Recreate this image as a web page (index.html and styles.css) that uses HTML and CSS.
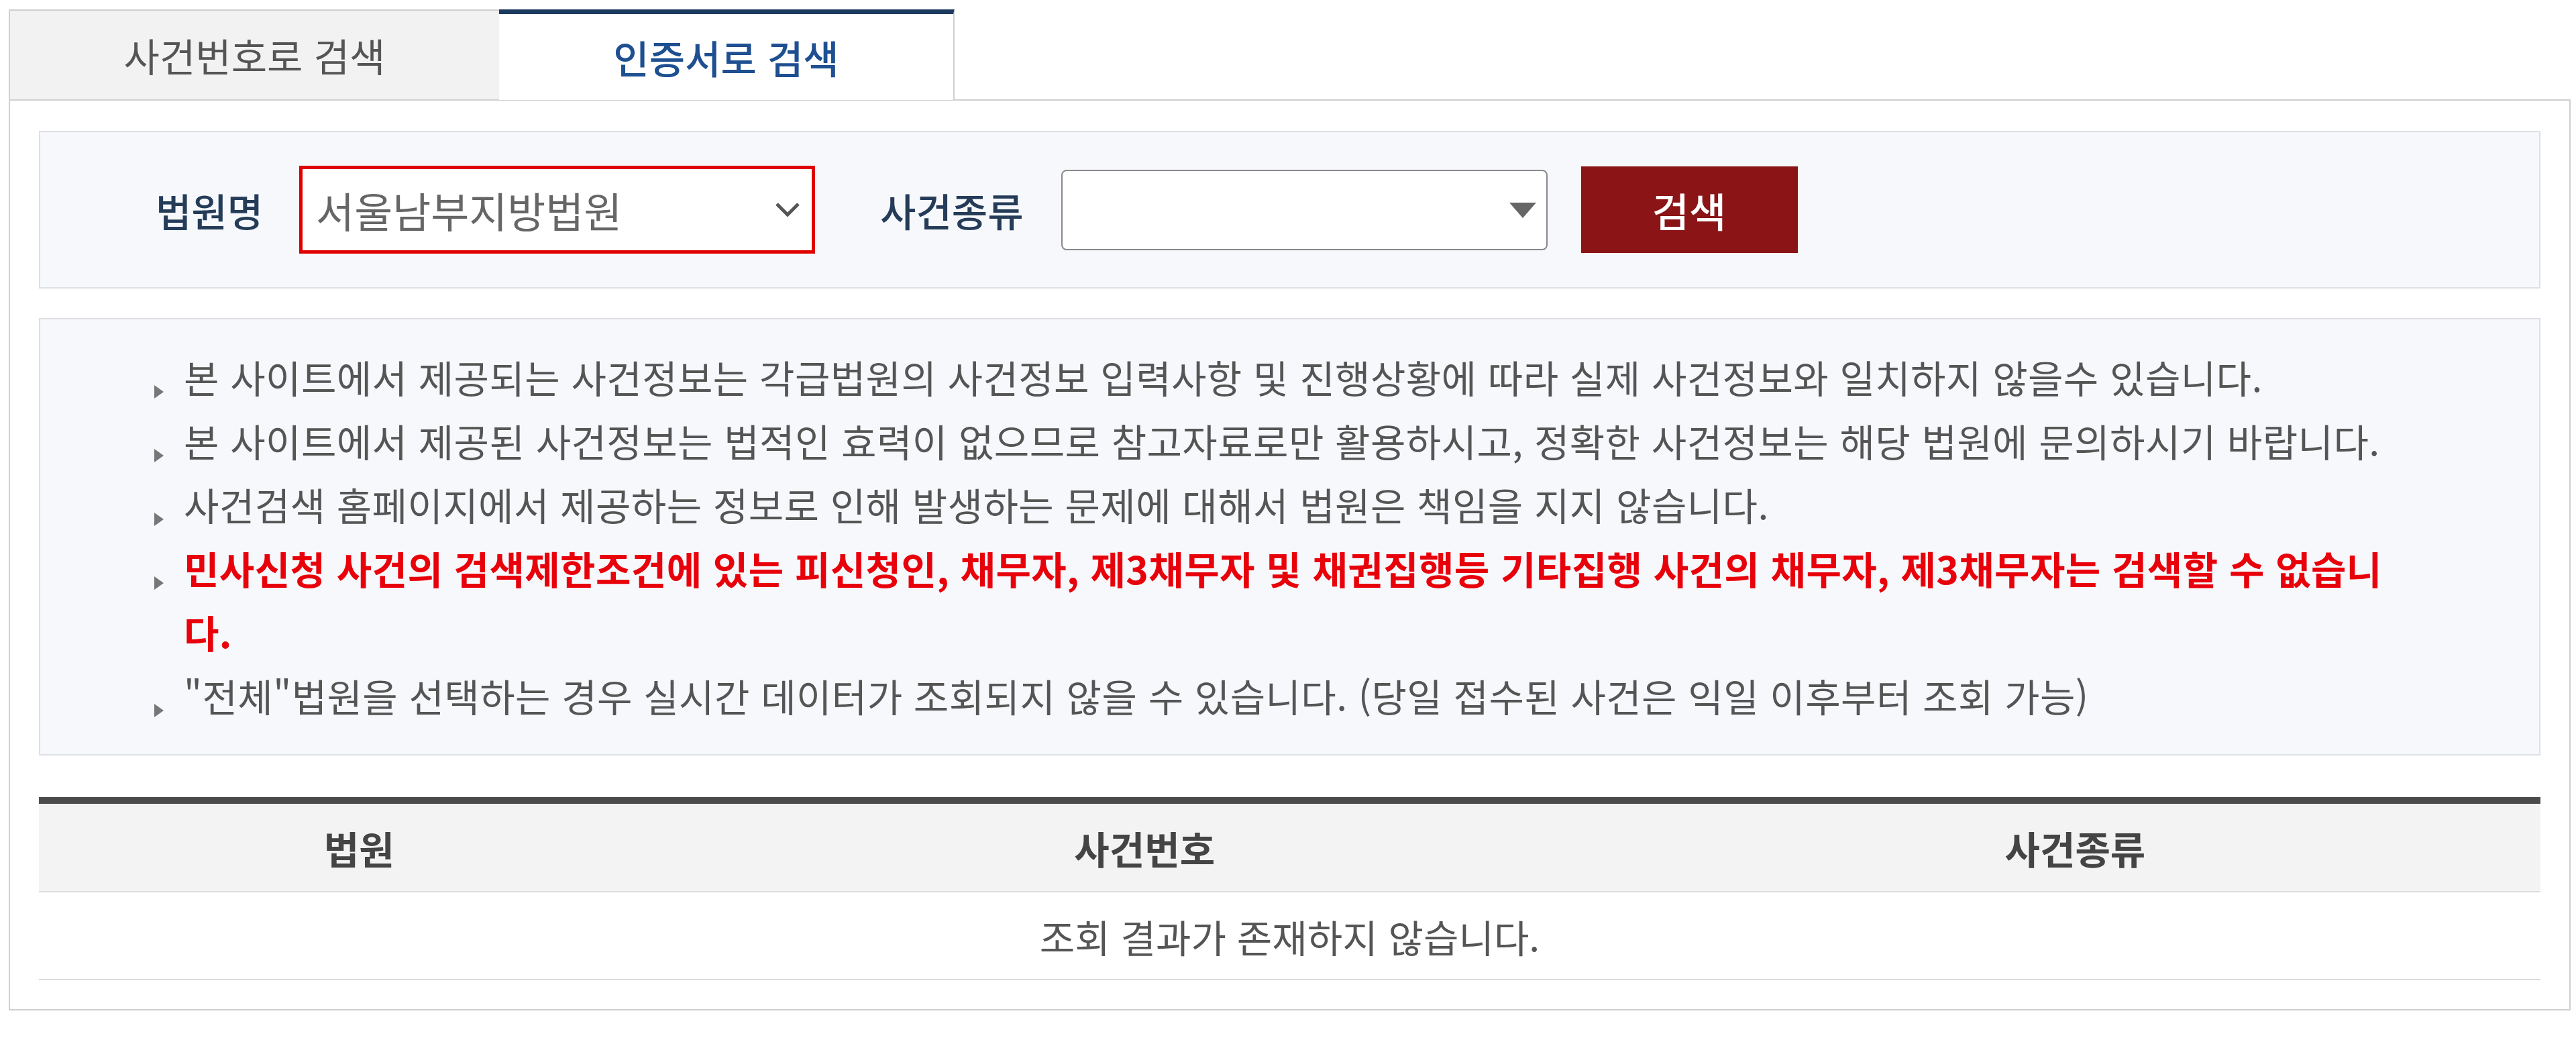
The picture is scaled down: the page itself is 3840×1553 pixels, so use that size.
FILE: index.html
```html
<!DOCTYPE html>
<html lang="ko">
<head>
<meta charset="UTF-8">
<meta name="viewport" content="width=device-width, initial-scale=1.0">
<title>나의 사건검색</title>
<link rel="stylesheet" href="styles.css">
</head>
<body>

<div class="tab-bar">
    <div class="tab">사건번호로 검색</div>
    <div class="tab tab-active">인증서로 검색</div>
</div>

<div class="tab-content">
    <div class="search-box">
        <label class="search-label label-court" for="court">법원명</label>
        <div class="select-wrap select-court">
            <select id="court" class="select-input">
                <option>서울남부지방법원</option>
            </select>
            <svg class="select-chevron" viewBox="0 0 38 22" width="38" height="22">
                <path d="M3 3 L19 19 L35 3" fill="none" stroke="#555" stroke-width="5"/>
            </svg>
        </div>

        <label class="search-label label-kind" for="kind">사건종류</label>
        <div class="select-wrap select-kind">
            <select id="kind" class="select-input">
                <option></option>
            </select>
            <svg class="select-arrow" viewBox="0 0 40 23" width="40" height="23">
                <path d="M0 0 H40 L20 23 Z" fill="#666"/>
            </svg>
        </div>

        <button class="search-btn">검색</button>
    </div>

    <div class="notice-box">
        <ul class="notice-list">
            <li>본 사이트에서 제공되는 사건정보는 각급법원의 사건정보 입력사항 및 진행상황에 따라 실제 사건정보와 일치하지 않을수 있습니다.</li>
            <li>본 사이트에서 제공된 사건정보는 법적인 효력이 없으므로 참고자료로만 활용하시고, 정확한 사건정보는 해당 법원에 문의하시기 바랍니다.</li>
            <li>사건검색 홈페이지에서 제공하는 정보로 인해 발생하는 문제에 대해서 법원은 책임을 지지 않습니다.</li>
            <li class="notice-warn">민사신청 사건의 검색제한조건에 있는 피신청인, 채무자, 제3채무자 및 채권집행등 기타집행 사건의 채무자, 제3채무자는 검색할 수 없습니다.</li>
            <li>"전체"법원을 선택하는 경우 실시간 데이터가 조회되지 않을 수 있습니다. (당일 접수된 사건은 익일 이후부터 조회 가능)</li>
        </ul>
    </div>

    <table class="result-table">
        <colgroup>
            <col class="col-court">
            <col class="col-number">
            <col class="col-kind">
        </colgroup>
        <thead>
            <tr>
                <th>법원</th>
                <th>사건번호</th>
                <th>사건종류</th>
            </tr>
        </thead>
        <tbody>
            <tr>
                <td colspan="3">조회 결과가 존재하지 않습니다.</td>
            </tr>
        </tbody>
    </table>
</div>

</body>
</html>
```

FILE: styles.css
```css
body {
    margin: 14px 8px 0 13px;
    background: #fff;
    font-family: "Noto Sans CJK KR", "Noto Sans", sans-serif;
    font-size: 57px;
    color: #555;
}

/* tabs */
.tab-bar {
    display: flex;
    height: 134px;
}

.tab {
    width: 731px;
    box-sizing: border-box;
    display: flex;
    align-items: center;
    justify-content: center;
    background: #f2f2f2;
    border-top: 2px solid #cfcfcf;
    border-left: 2px solid #cfcfcf;
    color: #555;
    font-size: 58px;
}

.tab-active {
    width: 679px;
    height: 136px;
    margin-top: -1px;
    margin-bottom: -2px;
    position: relative;
    z-index: 1;
    background: #fff;
    border-top: 8px solid #1c3a5e;
    border-left: none;
    border-right: 2px solid #cfcfcf;
    color: #1e4f91;
    font-weight: 500;
}

.tab-content {
    border: 2px solid #cfcfcf;
    padding: 45px 43px 43px 43px;
}

/* search row */
.search-box {
    display: flex;
    align-items: center;
    height: 231px;
    border: 2px solid #dcdfe5;
    background: #f6f8fb;
}

.search-label {
    color: #253c59;
    font-size: 58px;
    font-weight: 500;
}

.label-court { margin-left: 172px; }
.label-kind { margin-left: 97px; }

.select-wrap {
    position: relative;
    box-sizing: border-box;
    background: #fff;
}

.select-court {
    width: 769px;
    height: 131px;
    margin-left: 54px;
    border: 5px solid #e00000;
}

.select-kind {
    width: 725px;
    height: 120px;
    margin-left: 56px;
    border: 2px solid #8a8a8a;
    border-radius: 8px;
}

.select-input {
    appearance: none;
    -webkit-appearance: none;
    width: 100%;
    height: 100%;
    border: none;
    outline: none;
    background: transparent;
    padding: 0 0 0 20px;
    font-family: inherit;
    font-size: 62px;
    color: #666;
}

.select-chevron {
    position: absolute;
    right: 17px;
    top: 49px;
}

.select-arrow {
    position: absolute;
    right: 15px;
    top: 47px;
}

.search-btn {
    width: 323px;
    height: 129px;
    margin-left: 50px;
    border: none;
    background: #8b1417;
    color: #fff;
    font-family: inherit;
    font-size: 60px;
    font-weight: 500;
    cursor: pointer;
}

/* notices */
.notice-box {
    margin-top: 44px;
    border: 2px solid #dcdfe5;
    background: #f6f8fb;
}

.notice-list {
    list-style: none;
    margin: 0;
    padding: 38px 215px 40px 170px;
    line-height: 95px;
    letter-spacing: 0.4px;
}

.notice-list li {
    position: relative;
    padding-left: 44px;
    color: #555;
}

.notice-list li::before {
    content: "";
    position: absolute;
    left: 0;
    top: 60px;
    border-left: 14px solid #777;
    border-top: 10px solid transparent;
    border-bottom: 10px solid transparent;
}

.notice-list .notice-warn {
    color: #e8000b;
    font-weight: 700;
}

/* result table */
.result-table {
    width: 100%;
    margin-top: 62px;
    border-collapse: collapse;
    border-top: 10px solid #4b4b4b;
    table-layout: fixed;
}

.col-court { width: 25.6%; }
.col-number { width: 37.2%; }
.col-kind { width: 37.2%; }

.result-table th {
    height: 130px;
    padding: 0;
    background: #f3f3f3;
    border-bottom: 2px solid #dcdcdc;
    color: #444;
    font-size: 57px;
    font-weight: 700;
}

.result-table td {
    height: 129px;
    padding: 0;
    text-align: center;
    border-bottom: 2px solid #dcdcdc;
    color: #555;
}
```
